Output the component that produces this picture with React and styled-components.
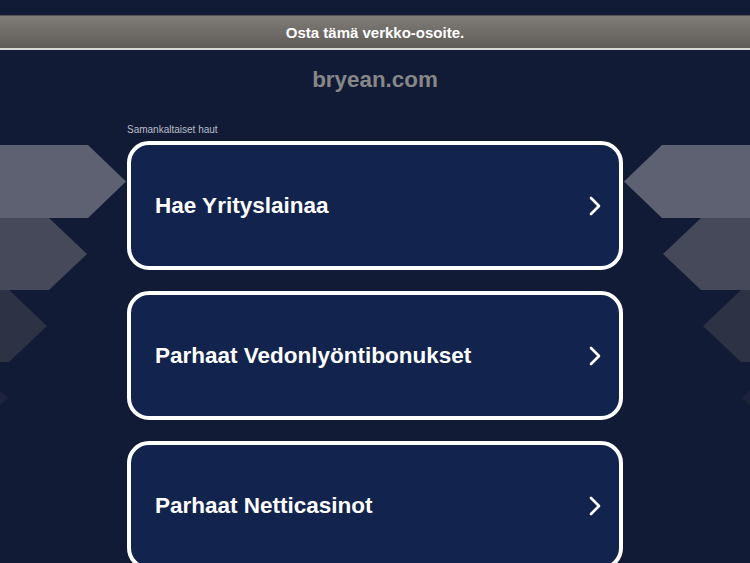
import styled, { createGlobalStyle } from "styled-components";

const links = ["Hae Yrityslainaa", "Parhaat Vedonlyöntibonukset", "Parhaat Netticasinot"];

const bands = [
  { points: "-40,145 88,145 126,181.5 88,218 -40,218", fill: "#5e6171" },
  { points: "-40,218 49,218 87,254 49,290 -40,290", fill: "#464959" },
  { points: "-40,290 9,290 47,326 9,362 -40,362", fill: "#2e3245" },
  { points: "-40,362 -29,362 8,398 -29,434 -40,434", fill: "#1d2339" },
];

function Arrows() {
  return (
    <Decor width="750" height="563" viewBox="0 0 750 563">
      {bands.map((b) => (
        <polygon key={b.points} points={b.points} fill={b.fill} />
      ))}
      <g transform="translate(750 0) scale(-1 1)">
        {bands.map((b) => (
          <polygon key={b.points} points={b.points} fill={b.fill} />
        ))}
      </g>
    </Decor>
  );
}

function Chevron() {
  return (
    <svg width="14" height="20" viewBox="0 0 14 20">
      <path d="M3 2 L11 10 L3 18" fill="none" stroke="#fff" strokeWidth="2.6" strokeLinecap="round" strokeLinejoin="round" />
    </svg>
  );
}

export default function App() {
  return (
    <Page>
      <GlobalStyle />
      <Arrows />
      <BuyBar>Osta tämä verkko-osoite.</BuyBar>
      <Domain>bryean.com</Domain>
      <Results>
        <Label>Samankaltaiset haut</Label>
        {links.map((text) => (
          <Card key={text}>
            <CardText>{text}</CardText>
            <Chevron />
          </Card>
        ))}
      </Results>
    </Page>
  );
}

const GlobalStyle = createGlobalStyle`
  html, body {
    margin: 0;
    padding: 0;
    background: #111b36;
  }
`;

const Page = styled.div`
  position: relative;
  width: 750px;
  height: 563px;
  overflow: hidden;
  background: #111b36;
  padding-top: 15px;
  box-sizing: border-box;
  font-family: "Liberation Sans", Arial, sans-serif;
`;

const Decor = styled.svg`
  position: absolute;
  top: 0;
  left: 0;
  z-index: 0;
`;

const BuyBar = styled.div`
  position: relative;
  z-index: 1;
  height: 32px;
  display: flex;
  align-items: center;
  justify-content: center;
  background: linear-gradient(#807c78, #5f5b57);
  border-top: 1px solid #57534f;
  border-bottom: 2px solid #d8d8d8;
  color: #fff;
  font-size: 15px;
  font-weight: bold;
`;

const Domain = styled.div`
  position: relative;
  z-index: 1;
  margin-top: 17px;
  text-align: center;
  color: #878787;
  font-size: 22.4px;
  font-weight: bold;
  line-height: 26px;
`;

const Results = styled.div`
  position: relative;
  z-index: 1;
  width: 496px;
  margin: 31px auto 0;
  display: flex;
  flex-direction: column;
  gap: 21px;
`;

const Label = styled.div`
  color: #b9bcc6;
  font-size: 10px;
  line-height: 12px;
  margin-bottom: -16px;
`;

const Card = styled.div`
  height: 129px;
  flex-shrink: 0;
  box-sizing: border-box;
  border: 4px solid #fff;
  border-radius: 22px;
  background: #12244e;
  display: flex;
  align-items: center;
  justify-content: space-between;
  padding: 0 17px 0 24px;
`;

const CardText = styled.span`
  color: #fff;
  font-size: 22.5px;
  font-weight: bold;
`;
